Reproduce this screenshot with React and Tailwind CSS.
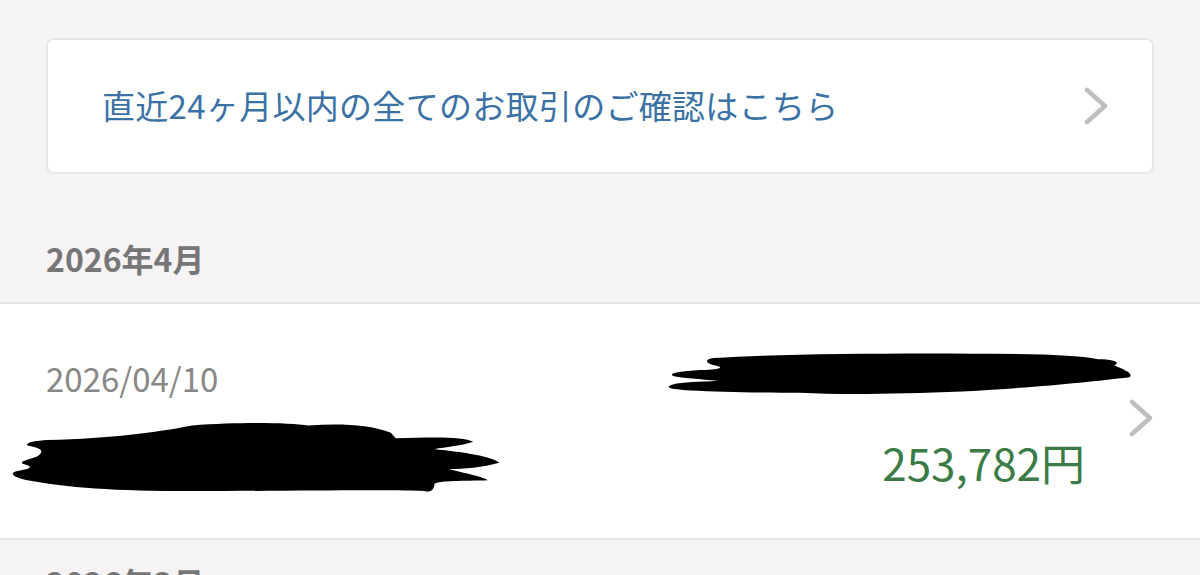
const font = { fontFamily: '"Noto Sans CJK JP", "Noto Sans", sans-serif' };

function Chevron({ className }) {
  return (
    <svg className={className} viewBox="0 0 24 38" fill="none">
      <polyline points="3,3 21,19 3,35" stroke="#bfbfbf" strokeWidth="4.5" strokeLinecap="round" strokeLinejoin="round" />
    </svg>
  );
}

function Redaction({ className, d }) {
  return (
    <svg className={className} viewBox="0 0 520 90" preserveAspectRatio="none">
      <path d={d} fill="#000" />
    </svg>
  );
}

export default function App() {
  return (
    <div className="w-full h-[575px] overflow-hidden bg-[#f5f3f4]" style={font}>
      <div className="pt-[38px] px-[46px]">
        {/* Link card */}
        <div className="h-[136px] bg-white border-2 border-[#e7e5e6] rounded-[8px] flex items-center justify-between pl-[54px] pr-[44px]">
          <span className="text-[33px] text-[#3b72a6] tracking-[0.3px]">
            直近24ヶ月以内の全てのお取引のご確認はこちら
          </span>
          <Chevron className="w-[24px] h-[38px]" />
        </div>

        <div className="pt-[60px] pb-[20px] text-[32px] font-bold text-[#767676] leading-[48px]">
          2026年4月
        </div>
      </div>

      {/* Transaction row */}
      <div className="relative bg-white border-t-2 border-b-2 border-[#e4e2e3] h-[238px] flex">
        <div className="flex-1 pl-[46px] pt-[50px]">
          <div className="text-[33px] text-[#888888] leading-[48px]">2026/04/10</div>
        </div>
        <div className="flex items-center pr-[47px] gap-[44px]">
          <div className="pt-[82px] text-[44px] text-[#3b7b45] leading-[56px]">253,782円</div>
          <Chevron className="w-[24px] h-[38px] mb-[6px]" />
        </div>

        <Redaction
          className="absolute left-[8px] top-[116px] w-[504px] h-[82px]"
          d="M40 22 C110 20 150 14 190 6 C240 2 290 3 310 6 C340 4 370 4 395 14 L400 20 C440 19 470 18 480 24 C470 28 450 30 440 32 C470 35 500 40 507 47 C490 52 470 54 455 54 C470 58 490 62 495 66 C470 67 445 66 440 70 C440 77 435 80 430 78 C380 76 300 78 190 78 C110 78 60 74 20 66 C5 63 0 58 10 56 C20 54 30 52 15 48 C12 45 20 44 30 40 C35 36 40 32 20 28 C18 24 30 23 40 22 Z"
        />
        <Redaction
          className="absolute left-[664px] top-[48px] w-[470px] h-[54px]"
          d="M55 10 C140 2 300 1 420 4 C450 6 470 8 480 12 C500 12 505 18 498 22 C510 30 520 36 515 42 C470 50 420 58 330 66 C260 70 200 72 150 68 C100 68 60 66 30 64 C5 62 0 58 10 54 C20 50 40 50 60 48 C40 45 20 44 10 40 C5 36 15 32 40 30 C60 29 70 26 55 22 C45 18 45 12 55 10 Z"
        />
      </div>

      <div className="pt-[18px] px-[46px] text-[32px] font-bold text-[#767676] leading-[48px]">
        2026年3月
      </div>
    </div>
  );
}
